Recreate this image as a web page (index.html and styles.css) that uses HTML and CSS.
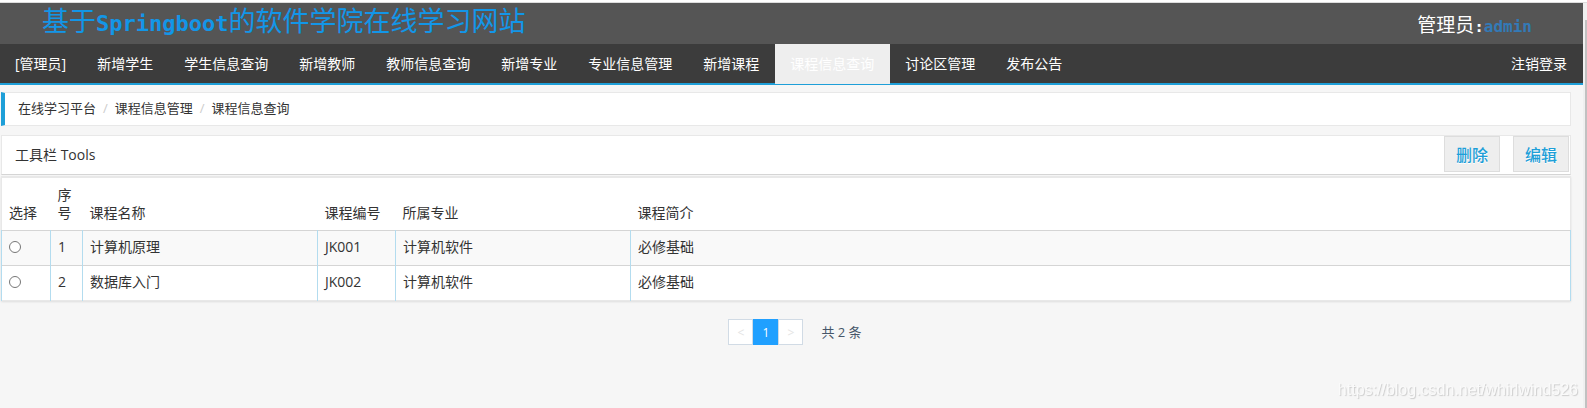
FILE: index.html
```
<!DOCTYPE html>
<html lang="zh-CN">
<head>
  <meta charset="UTF-8">
  <meta name="viewport" content="width=device-width, initial-scale=1.0">
  <title>基于Springboot的软件学院在线学习网站</title>
  <link rel="stylesheet" href="styles.css">
</head>
<body>
  <div class="window-edge"></div>
  <div class="layout">
    <div class="page">
      <!-- 顶部标题 -->
      <header class="header">
        <h1 class="site-title">基于<span class="latin">Springboot</span>的软件学院在线学习网站</h1>
        <div class="user">管理员<span class="latin">:<a href="#">admin</a></span></div>
      </header>

      <!-- 导航菜单 -->
      <nav class="nav">
        <a href="#">[管理员]</a>
        <a href="#">新增学生</a>
        <a href="#">学生信息查询</a>
        <a href="#">新增教师</a>
        <a href="#">教师信息查询</a>
        <a href="#">新增专业</a>
        <a href="#">专业信息管理</a>
        <a href="#">新增课程</a>
        <a href="#" class="active">课程信息查询</a>
        <a href="#">讨论区管理</a>
        <a href="#">发布公告</a>
        <a href="#" class="logout">注销登录</a>
      </nav>

      <main class="content">
        <!-- 面包屑 -->
        <div class="breadcrumb">
          <a href="#">在线学习平台</a>
          <span class="sep">/</span>
          <a href="#">课程信息管理</a>
          <span class="sep">/</span>
          <a href="#">课程信息查询</a>
        </div>

        <!-- 工具栏 -->
        <div class="toolbar">
          <span class="toolbar-title">工具栏 Tools</span>
          <div class="toolbar-btns">
            <button type="button">删除</button>
            <button type="button">编辑</button>
          </div>
        </div>

        <!-- 课程列表 -->
        <table class="table">
          <colgroup>
            <col class="col-select">
            <col class="col-index">
            <col class="col-name">
            <col class="col-code">
            <col class="col-major">
            <col>
          </colgroup>
          <thead>
            <tr>
              <th>选择</th>
              <th>序号</th>
              <th>课程名称</th>
              <th>课程编号</th>
              <th>所属专业</th>
              <th>课程简介</th>
            </tr>
          </thead>
          <tbody>
            <tr>
              <td><input type="radio" name="course" value="1" aria-label="计算机原理"></td>
              <td>1</td>
              <td>计算机原理</td>
              <td>JK001</td>
              <td>计算机软件</td>
              <td>必修基础</td>
            </tr>
            <tr>
              <td><input type="radio" name="course" value="2" aria-label="数据库入门"></td>
              <td>2</td>
              <td>数据库入门</td>
              <td>JK002</td>
              <td>计算机软件</td>
              <td>必修基础</td>
            </tr>
          </tbody>
        </table>

        <!-- 分页 -->
        <div class="pager">
          <div class="pager-btns">
            <button type="button" disabled>&lt;</button>
            <button type="button" class="current">1</button>
            <button type="button" disabled>&gt;</button>
          </div>
          <span class="total">共 2 条</span>
        </div>
      </main>
    </div>
    <div class="scroll-track">
      <div class="scroll-thumb"></div>
    </div>
  </div>
  <div class="watermark">https://blog.csdn.net/whirlwind526</div>
</body>
</html>
```
FILE: styles.css
```
/* 全局样式 */
* {
  margin: 0;
  padding: 0;
  box-sizing: border-box;
}

body {
  display: flex;
  flex-direction: column;
  min-height: 100vh;
  background-color: #f6f6f6;
  color: #333;
  font-family: "Open Sans", "Noto Sans CJK SC", sans-serif;
  font-size: 14px;
}

a {
  color: inherit;
  text-decoration: none;
}

button {
  font-family: inherit;
  cursor: pointer;
}

.window-edge {
  height: 3px;
  background-color: #fff;
  border-bottom: 1px solid #ddd;
}

.layout {
  display: flex;
  flex: 1;
}

.page {
  flex: 1;
}

.scroll-track {
  display: flex;
  width: 4px;
  padding: 17px 0 0 2px;
  background-color: #f0f0f0;
}

.scroll-thumb {
  flex: 1;
  background-color: #c1c1c1;
}

/* 顶部标题 */
.header {
  display: flex;
  justify-content: space-between;
  height: 41px;
  padding: 0 51px 0 42px;
  background-color: #555;
}

.site-title {
  color: #1296e8;
  font-size: 27px;
  font-weight: normal;
  line-height: 36px;
}

.latin {
  font-family: "DejaVu Sans Mono", monospace;
  font-weight: bold;
}

.site-title .latin {
  font-size: 22px;
}

.user {
  color: #fff;
  font-size: 19px;
  line-height: 44px;
}

.user .latin {
  font-size: 16px;
}

.user a {
  color: #337ab7;
}

/* 导航菜单 */
.nav {
  display: flex;
  height: 41px;
  background-color: #3c3c3c;
  border-bottom: 2px solid #1e9fd8;
  color: #fff;
  line-height: 39px;
}

.nav a {
  padding: 0 16px 0 15px;
}

.nav .active {
  height: 40px;
  background-color: #eee;
}

.nav .logout {
  margin-left: auto;
}

/* 内容区 */
.content {
  padding: 7px 12px 0 1px;
}

.breadcrumb {
  display: flex;
  gap: 7px;
  height: 34px;
  padding-left: 13px;
  background-color: #fff;
  border: 1px solid #e8e8e8;
  border-left: 4px solid #1e9fd8;
  font-size: 13px;
  line-height: 30px;
}

.sep {
  color: #ccc;
}

/* 工具栏 */
.toolbar {
  display: flex;
  justify-content: space-between;
  height: 40px;
  margin-top: 9px;
  padding: 0 1px 0 13px;
  background-color: #fff;
  border: 1px solid #e8e8e8;
  border-bottom-color: #d5d5d5;
  line-height: 38px;
}

.toolbar-btns {
  display: flex;
  gap: 13px;
}

.toolbar-btns button {
  width: 56px;
  height: 36px;
  background-color: #eee;
  border: 1px solid #ddd;
  color: #1e9fd8;
  font-size: 16px;
  font-weight: 500;
  text-shadow: 0 1px 0 #fff;
}

/* 课程列表 */
.table {
  width: 100%;
  margin-top: 1px;
  background-color: #fff;
  border: 1px solid #e8e8e8;
  border-top-width: 2px;
  border-collapse: collapse;
  table-layout: fixed;
  box-shadow: 0 1px 2px rgba(0, 0, 0, 0.1);
}

.table th,
.table td {
  padding: 8px 7px;
  line-height: 18px;
  text-align: left;
  font-weight: normal;
}

.table th {
  vertical-align: bottom;
}

.table td {
  padding: 7px 7px 9px;
  border: 1px solid #b3dcef;
  border-top-color: #d5d5d5;
  border-bottom: 0;
}

.table tbody tr:nth-child(odd) {
  background-color: #f9f9f9;
}

.table input {
  display: block;
  width: 12px;
  height: 12px;
}

.col-select {
  width: 49px;
}

.col-index {
  width: 32px;
}

.col-name,
.col-major {
  width: 235px;
}

.col-code {
  width: 78px;
}

/* 分页 */
.pager {
  display: flex;
  justify-content: center;
  gap: 18px;
  margin-top: 18px;
  padding-left: 18px;
  color: #475669;
  font-size: 13px;
  line-height: 26px;
}

.pager-btns {
  display: flex;
}

.pager button {
  width: 25px;
  height: 26px;
  background-color: #fff;
  border: 1px solid #d1dbe5;
  color: #e4e4e4;
  font-size: 12px;
}

.pager .current {
  background-color: #20a0ff;
  border-color: #20a0ff;
  color: #fff;
}

/* 水印 */
.watermark {
  position: fixed;
  right: 9px;
  bottom: 9px;
  color: #fafafa;
  font-family: "Liberation Sans", sans-serif;
  font-size: 16px;
  text-shadow: 1px 1px 1px #ccc;
}
```
